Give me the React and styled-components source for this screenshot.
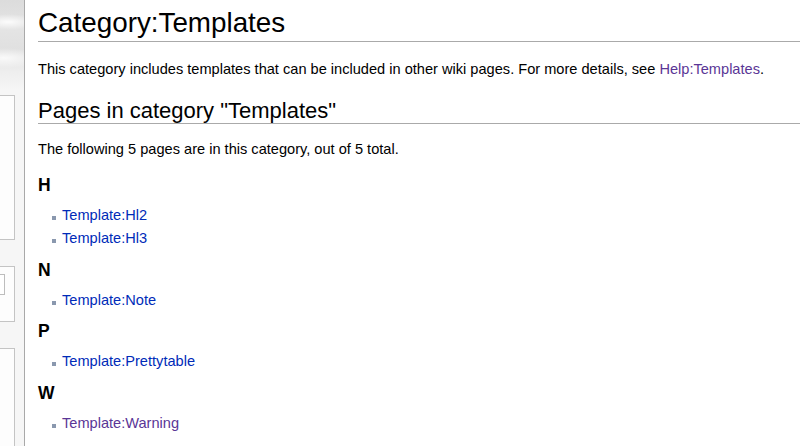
import React from "react";
import styled, { createGlobalStyle } from "styled-components";

const Global = createGlobalStyle`
  html, body {
    margin: 0;
    padding: 0;
    background: #fff;
    font-family: "Liberation Sans", Arial, sans-serif;
  }
`;

const Page = styled.div`
  display: flex;
  width: 800px;
  height: 446px;
  overflow: hidden;
`;

const Sidebar = styled.div`
  flex: 0 0 24px;
  display: flex;
  flex-direction: column;
  gap: 26px;
  padding-top: 95px;
  border-right: 1px solid #a9a9a9;
  background:
    radial-gradient(ellipse 30px 8px at 8px 22px, rgba(255,255,255,0.9), rgba(255,255,255,0) 100%),
    radial-gradient(ellipse 40px 10px at 4px 58px, rgba(255,255,255,0.8), rgba(255,255,255,0) 100%),
    linear-gradient(to bottom, #dcdcdc 0, #e4e4e4 30px, #e0e0e0 50px, #eeeeee 72px, #f6f6f6 90px, #f6f6f6 100%);
`;

const Portlet = styled.div`
  flex: ${p => (p.$fill ? "1 1 auto" : `0 0 ${p.$h}px`)};
  box-sizing: border-box;
  width: 15px;
  background: #fdfdfd;
  border: 1px solid #c4c4c4;
  border-left: none;
  border-bottom: ${p => (p.$fill ? "none" : "1px solid #c4c4c4")};
  padding-top: 7px;
`;

const SearchField = styled.div`
  width: 4px;
  height: 19px;
  border: 1px solid #bdbdbd;
  border-left: none;
  background: #fff;
`;

const Content = styled.div`
  flex: 1;
  padding-left: 13px;
  color: #000;
  font-size: 14.6px;
`;

const Title = styled.h1`
  margin: 7px 0 0;
  padding-bottom: 2px;
  font-size: 27.8px;
  font-weight: normal;
  line-height: 32px;
  border-bottom: 1px solid #aaa;
`;

const Para = styled.p`
  margin: ${p => p.$top}px 0 0;
  line-height: 20px;
`;

const Section = styled.h2`
  margin: 19px 0 0;
  font-size: 22px;
  font-weight: normal;
  line-height: 25px;
  border-bottom: 1px solid #aaa;
`;

const Groups = styled.div`
  margin-top: 15px;
`;

const Letter = styled.h3`
  margin: 8.7px 0 0;
  font-size: 17.5px;
  font-weight: bold;
  line-height: 22px;
`;

const List = styled.ul`
  list-style: none;
  margin: 8px 0 0;
  padding: 0 0 0 24px;
`;

const Item = styled.li`
  position: relative;
  line-height: 23px;
  &::before {
    content: "";
    position: absolute;
    left: -10px;
    top: 12px;
    width: 4px;
    height: 4px;
    background: #8a98ae;
  }
`;

const Link = styled.a`
  color: ${p => (p.$visited ? "#5a3696" : "#002bb8")};
  text-decoration: none;
`;

const groups = [
  { letter: "H", pages: [{ name: "Template:Hl2" }, { name: "Template:Hl3" }] },
  { letter: "N", pages: [{ name: "Template:Note" }] },
  { letter: "P", pages: [{ name: "Template:Prettytable" }] },
  { letter: "W", pages: [{ name: "Template:Warning", visited: true }] },
];

export default function App() {
  return (
    <Page>
      <Global />
      <Sidebar>
        <Portlet $h={145} />
        <Portlet $h={56}>
          <SearchField />
        </Portlet>
        <Portlet $fill />
      </Sidebar>
      <Content>
        <Title>Category:Templates</Title>
        <Para $top={17}>
          This category includes templates that can be included in other wiki pages. For more
          details, see <Link $visited href="#">Help:Templates</Link>.
        </Para>
        <Section>Pages in category "Templates"</Section>
        <Para $top={15}>The following 5 pages are in this category, out of 5 total.</Para>
        <Groups>
          {groups.map(g => (
            <div key={g.letter}>
              <Letter>{g.letter}</Letter>
              <List>
                {g.pages.map(pg => (
                  <Item key={pg.name}>
                    <Link $visited={pg.visited} href="#">{pg.name}</Link>
                  </Item>
                ))}
              </List>
            </div>
          ))}
        </Groups>
      </Content>
    </Page>
  );
}
